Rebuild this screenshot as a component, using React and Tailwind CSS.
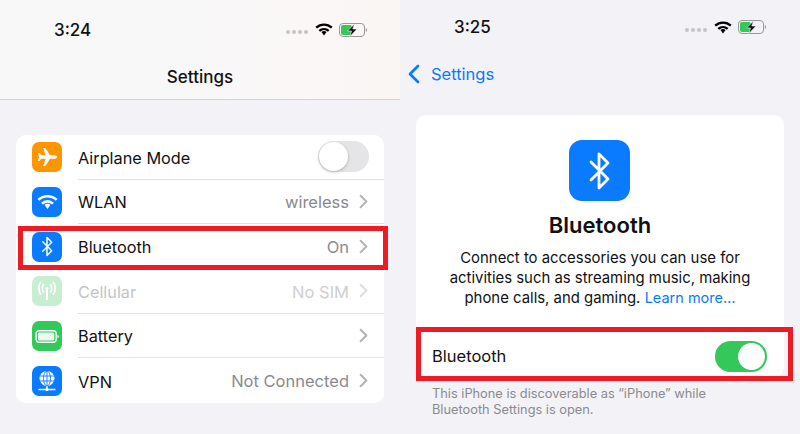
import { ChevronRight, ChevronLeft } from 'lucide-react';

const BLUE = 'bg-[#0a7aff]';

function WifiGlyph({ className }) {
  return (
    <svg viewBox="0 0 18 13" className={className} fill="none" stroke="currentColor" strokeWidth="2.300">
      <path d="M1.200 4.700C5.600.5 12.400.5 16.800 4.700" />
      <path d="M4.300 7.900c2.700-2.500 6.700-2.500 9.400 0" />
      <path d="M9 7.900c-1 0-1.900.4-2.500 1L9 12.600l2.500-3.700c-.6-.6-1.500-1-2.500-1z" fill="currentColor" stroke="none" />
    </svg>
  );
}

function StatusIcons() {
  return (
    <div className="flex items-center">
      <div className="flex gap-[2px] mr-[7px] mt-[5px]">
        <span className="w-[4px] h-[4px] rounded-full bg-[#c4c4c4]" />
        <span className="w-[4px] h-[4px] rounded-full bg-[#c4c4c4]" />
        <span className="w-[4px] h-[4px] rounded-full bg-[#c4c4c4]" />
        <span className="w-[4px] h-[4px] rounded-full bg-[#c4c4c4]" />
      </div>
      <WifiGlyph className="w-[18px] h-[13px] text-black mr-[6px]" />
      <svg viewBox="0 0 28 14" className="w-[28px] h-[14px]">
        <rect x="0.500" y="0.500" width="25" height="13" rx="3.500" fill="none" stroke="#9a9a9a" />
        <rect x="2" y="2" width="11" height="10" rx="2" fill="#34c759" />
        <path d="M26.800 5v4c.7-.3 1.200-1.100 1.200-2s-.5-1.700-1.200-2z" fill="#9a9a9a" />
        <path d="M15.500 1 8.500 8h4l-1.500 5.500L18 6h-4.200z" fill="#111" stroke="#f7f7f7" strokeWidth="0.600" />
      </svg>
    </div>
  );
}

function BluetoothGlyph({ className }) {
  return (
    <svg viewBox="0 0 24 40" className={className} fill="none" stroke="white" strokeWidth="2.800" strokeLinejoin="round" strokeLinecap="round">
      <path d="M3 11 20 28 11 37V3l9 9L3 29" />
    </svg>
  );
}

function Row({ icon, iconBg, label, value, muted, last, children }) {
  return (
    <div className="h-[44.700px] flex items-center pl-[16px]">
      <div className={`w-[30px] h-[30px] rounded-[7px] flex items-center justify-center shrink-0 ${iconBg}`}>
        {icon}
      </div>
      <div className={`flex-1 h-full ml-[16px] flex items-center pr-[15px] ${last ? '' : 'border-b border-[#e2e2e4]'}`}>
        <span className={`text-[16.300px] mt-[2px] ${muted ? 'text-[#c4c4c6]' : 'text-[#111]'}`}>{label}</span>
        <div className="ml-auto flex items-center">
          {value && <span className={`text-[16.500px] mt-[2px] ${muted ? 'text-[#cfcfd1]' : 'text-[#8a8a8e]'}`}>{value}</span>}
          {value && (
            <ChevronRight size={23} strokeWidth={2.200} className={`ml-[3px] -mr-[6px] ${muted ? 'text-[#dedee0]' : 'text-[#b5b5b8]'}`} />
          )}
          {children}
        </div>
      </div>
    </div>
  );
}

function RedBox({ className }) {
  return <div className={`absolute border-[5px] border-[#ed1c24] ${className}`} />;
}

export default function App() {
  return (
    <div className="w-[800px] h-[434px] flex overflow-hidden bg-[#f2f2f7] font-['Inter','Liberation_Sans',sans-serif]">
      {/* left phone */}
      <div className="w-[400px] shrink-0 relative">
        <div className="h-[100px] bg-linear-to-r from-[#f8f8f8] via-[#f9f8f8] to-[#fbf6f4] border-b border-[#d3d3d6]">
          <div className="flex items-center justify-between pl-[54px] pr-[33px] pt-[19px] h-[40px]">
            <span className="text-[17px] font-medium text-[#111] leading-[22px]">3:24</span>
            <StatusIcons />
          </div>
          <div className="text-center text-[17px] font-medium text-[#111] mt-[25px] leading-[24px]">Settings</div>
        </div>

        <div className="mx-[16px] mt-[35px] bg-white rounded-[10px]">
          <Row
            label="Airplane Mode"
            iconBg="bg-[#ff9500]"
            icon={
              <svg viewBox="0 0 24 24" className="w-[24px] h-[24px]" fill="white">
                <path d="M22 12c0-1-1-1.800-2.200-1.800h-4.700L10.300 3H8.200l2.400 7.200H6.200L4.400 8H3l1 4-1 4h1.400l1.800-2.200h4.400L8.200 21h2.100l4.800-7.200h4.700C21 13.800 22 13 22 12z" />
              </svg>
            }
          >
            <div className="w-[51px] h-[31px] rounded-full bg-[#e5e5e7] p-[1px]">
              <div className="w-[29px] h-[29px] rounded-full bg-white shadow-[0_1px_3px_rgba(0,0,0,0.25)]" />
            </div>
          </Row>
          <Row
            label="WLAN"
            value="wireless"
            iconBg={BLUE}
            icon={<WifiGlyph className="w-[21px] h-[16px] text-white" />}
          />
          <Row
            label="Bluetooth"
            value="On"
            iconBg={BLUE}
            icon={<BluetoothGlyph className="w-[13px] h-[21px]" />}
          />
          <Row
            label="Cellular"
            value="No SIM"
            muted
            iconBg="bg-[#c8eed2]"
            icon={
              <svg viewBox="0 0 24 24" className="w-[22px] h-[22px]" fill="none" stroke="white" strokeWidth="1.800" strokeLinecap="round">
                <path d="M12 10v11" strokeWidth="2.200" />
                <circle cx="12" cy="9" r="1.600" fill="white" stroke="none" />
                <path d="M8.200 13c-1.700-2.200-1.700-5.800 0-8M15.800 13c1.700-2.200 1.700-5.800 0-8" />
                <path d="M5 15.500C2.500 12 2.500 6 5 2.500M19 15.500c2.500-3.500 2.500-9.500 0-13" />
              </svg>
            }
          />
          <Row
            label="Battery"
            value=" "
            iconBg="bg-[#34c759]"
            icon={
              <svg viewBox="0 0 26 14" className="w-[25px] h-[13px]">
                <rect x="0.800" y="0.800" width="21.500" height="12.400" rx="3" fill="none" stroke="white" strokeWidth="1.400" />
                <rect x="2.800" y="2.800" width="17.500" height="8.400" rx="1.500" fill="#eefaf1" />
                <path d="M23.800 5v4c.8-.3 1.300-1.100 1.300-2s-.5-1.700-1.300-2z" fill="white" />
              </svg>
            }
          />
          <Row
            label="VPN"
            value="Not Connected"
            last
            iconBg={BLUE}
            icon={
              <svg viewBox="0 0 24 24" className="w-[24px] h-[24px]" fill="none" stroke="white">
                <circle cx="12" cy="9.500" r="7.500" fill="white" stroke="none" />
                <g stroke="#0a7aff" strokeWidth="0.900">
                  <ellipse cx="12" cy="9.500" rx="3.500" ry="7.500" />
                  <path d="M12 2v15M4.800 7h14.400M4.800 12h14.400" />
                </g>
                <path d="M12 17v4M3.500 20.500h17" strokeWidth="1.500" />
                <circle cx="12" cy="20.500" r="1.600" fill="white" stroke="none" />
              </svg>
            }
          />
        </div>

        <RedBox className="left-[18px] top-[226px] w-[370px] h-[44px]" />
      </div>

      {/* right phone */}
      <div className="w-[400px] shrink-0 relative">
        <div className="flex items-center justify-between pl-[54px] pr-[34px] pt-[16px] h-[38px]">
          <span className="text-[17px] font-medium text-[#111] leading-[22px]">3:25</span>
          <StatusIcons />
        </div>
        <div className="flex items-center mt-[22px] h-[28px] -ml-[2px] text-[#0a7aff]">
          <ChevronLeft size={32} strokeWidth={2} className="shrink-0" />
          <span className="text-[16.500px] ml-[1px]">Settings</span>
        </div>

        <div className="mx-[16px] mt-[27px] bg-white rounded-[10px] h-[262px] flex flex-col items-center pt-[25px]">
          <div className={`w-[61px] h-[61px] rounded-[13px] mr-[1px] ${BLUE} flex items-center justify-center`}>
            <BluetoothGlyph className="w-[26px] h-[40px]" />
          </div>
          <div className="text-[22px] font-semibold text-[#111] mt-[10px] leading-[28px]">Bluetooth</div>
          <div className="text-[14.900px] leading-[20px] text-[#111] text-center mt-[9px] w-[320px]">
            Connect to accessories you can use for activities such as streaming music, making phone calls, and gaming.{' '}
            <span className="text-[14.500px] text-[#0a7aff]">Learn more…</span>
          </div>
          <div className="mt-auto h-[42px] w-full flex items-center justify-between pl-[16px] pr-[17px]">
            <span className="text-[16.500px] text-[#111]">Bluetooth</span>
            <div className="w-[52px] h-[31px] rounded-full bg-[#34c759] p-[2px] flex justify-end">
              <div className="w-[27px] h-[27px] rounded-full bg-white" />
            </div>
          </div>
        </div>

        <p className="mx-[32px] mt-[9px] w-[300px] text-[12.800px] leading-[16px] text-[#8a8a8e]">
          This iPhone is discoverable as “iPhone” while Bluetooth Settings is open.
        </p>

        <RedBox className="left-[16px] top-[327px] w-[377px] h-[54px]" />
      </div>
    </div>
  );
}
